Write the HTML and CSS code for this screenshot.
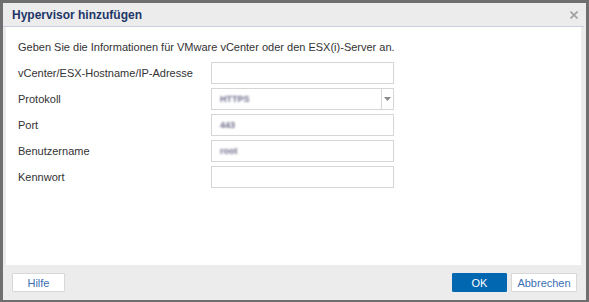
FILE: index.html
```html
<!DOCTYPE html>
<html lang="de">
<head>
<meta charset="utf-8">
<link rel="stylesheet" href="styles.css">
</head>
<body>
<div class="dialog">
  <div class="header">
    <span class="title">Hypervisor hinzufügen</span>
    <span class="close"><svg width="8" height="8" viewBox="0 0 8 8"><path d="M0.5 0.5L7.5 7.5M7.5 0.5L0.5 7.5" stroke="#a0a0a0" stroke-width="1.6"/></svg></span>
  </div>
  <div class="content">
    <p class="intro">Geben Sie die Informationen für VMware vCenter oder den ESX(i)-Server an.</p>
    <div class="form">
      <label class="label">vCenter/ESX-Hostname/IP-Adresse</label>
      <div class="field"></div>
      <label class="label">Protokoll</label>
      <div class="field select"><span class="val">HTTPS</span><span class="arrow"><svg width="7" height="4" viewBox="0 0 7 4"><path d="M0 0h7L3.5 4z" fill="#8a8a8a"/></svg></span></div>
      <label class="label">Port</label>
      <div class="field"><span class="val">443</span></div>
      <label class="label">Benutzername</label>
      <div class="field"><span class="val">root</span></div>
      <label class="label">Kennwort</label>
      <div class="field"></div>
    </div>
  </div>
  <div class="footer">
    <button class="btn">Hilfe</button>
    <div class="right">
      <button class="btn primary">OK</button>
      <button class="btn">Abbrechen</button>
    </div>
  </div>
</div>
</body>
</html>
```
FILE: styles.css
```css
html, body { margin: 0; padding: 0; }
body {
  background: #6f6f6f;
  width: 589px;
  height: 302px;
  overflow: hidden;
  font-family: "Liberation Sans", Arial, sans-serif;
  font-size: 11px;
  color: #333;
}
.dialog {
  margin: 3px 0 0 3px;
  width: 583px;
  height: 297px;
  background: #ececec;
  display: flex;
  flex-direction: column;
}
.header {
  height: 23px;
  border-bottom: 1px solid #c9cde0;
  display: flex;
  align-items: center;
  justify-content: space-between;
  padding: 0 6px 0 9px;
  margin-right: 2px;
}
.title {
  font-weight: bold;
  font-size: 12px;
  color: #1e3668;
}
.close {
  display: flex;
  width: 8px;
  height: 8px;
}
.content {
  margin: 0 5px 0 3px;
  height: 238px;
  background: #fff;
  padding: 0 12px;
}
.intro {
  margin: 0;
  padding-top: 14px;
  height: 21px;
  line-height: 13px;
}
.form {
  display: grid;
  grid-template-columns: 193px 183px;
  row-gap: 4px;
  align-items: center;
}
.label { color: #333; }
.field {
  box-sizing: border-box;
  height: 22px;
  border: 1px solid #d6d6d6;
  background: #fff;
  display: flex;
  align-items: center;
  padding-left: 8px;
}
.val {
  color: #6b6b8a;
  filter: blur(1.1px);
  font-size: 9px;
  font-weight: bold;
}
.select { position: relative; }
.arrow {
  margin-left: auto;
  width: 11px;
  height: 100%;
  border-left: 1px solid #d6d6d6;
  display: flex;
  align-items: center;
  justify-content: center;
}
.footer {
  flex: 1;
  display: flex;
  align-items: center;
  justify-content: space-between;
  padding: 0 9px 0 9px;
}
.right { display: flex; gap: 4px; }
.btn {
  box-sizing: border-box;
  height: 19px;
  padding: 0;
  border: 1px solid #d8d8d8;
  background: #fff;
  color: #3a6fb5;
  font-family: "Liberation Sans", Arial, sans-serif;
  font-size: 11px;
  width: 53px;
  border-radius: 1px;
}
.btn.primary {
  background: #0067b0;
  border-color: #0067b0;
  color: #fff;
  width: 55px;
}
.right .btn:last-child { width: 66px; }
```
